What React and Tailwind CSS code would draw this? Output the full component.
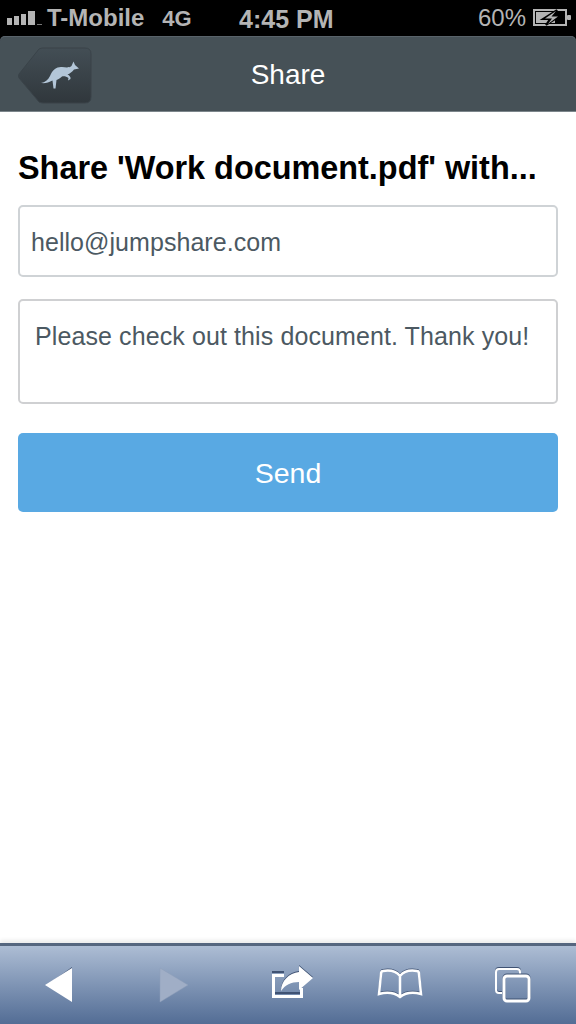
const helvetica = { fontFamily: '"Liberation Sans", Arial, sans-serif' };

function Signal() {
  return (
    <svg width="35" height="14" viewBox="0 0 35 14" className="block">
      <rect x="0" y="7" width="5" height="7" fill="#b4b4b4" />
      <rect x="7" y="5" width="5" height="9" fill="#b4b4b4" />
      <rect x="14" y="3" width="5" height="11" fill="#b4b4b4" />
      <rect x="21" y="0" width="7" height="14" fill="#b4b4b4" />
      <rect x="30" y="13" width="5" height="1" fill="#777" />
    </svg>
  );
}

function Battery() {
  return (
    <svg width="38" height="18" viewBox="0 0 38 18" className="block">
      <rect x="1" y="1" width="32" height="15" fill="none" stroke="#b4b4b4" strokeWidth="2" />
      <rect x="3" y="3" width="19" height="11" fill="#b4b4b4" />
      <rect x="34" y="6" width="4" height="5" rx="1" fill="#b4b4b4" />
      <path d="M24 1 L10 10 H17 L13 16 L27 7 H20 Z" fill="#000" stroke="#000" strokeWidth="2" />
      <path d="M23 2 L12 9.5 H19 L15 15 L25 7.5 H18.5 Z" fill="#b4b4b4" />
    </svg>
  );
}

function Kangaroo() {
  return (
    <svg width="40" height="32" viewBox="0 0 40 32" className="block">
      <path
        d="M1 24 C5 23.5 8 21 10 17 C12.5 10.5 17 7.5 22 8 C26 8.5 29 9 31.5 7 L33.5 2.5 L35 6 L39 9.5 L34 10.5 C32 13 30 14.5 27.5 15.5 C29.5 16.5 31 18 30.5 20 L28 21.5 L28.5 19 C26.5 17.5 24 17 22 17.5 C20 19.5 18 20.5 16.5 21 L15.5 29.5 L13.5 29.5 L12.5 21.5 C9 23.5 5 24.5 1 24 Z"
        fill="#b3c6d8"
      />
    </svg>
  );
}

function BackBadge() {
  return (
    <svg width="76" height="58" viewBox="0 0 76 58" className="block">
      <defs>
        <linearGradient id="badge" x1="0" y1="0" x2="0" y2="1">
          <stop offset="0" stopColor="#434e55" />
          <stop offset="1" stopColor="#30373c" />
        </linearGradient>
      </defs>
      <path
        d="M26 1 H68 Q74 1 74 7 V50 Q74 56 68 56 H26 Q24 56 22 55 L2 31 Q1 29 2 27 L22 2 Q24 1 26 1 Z"
        fill="url(#badge)"
        stroke="#3a4349"
      />
    </svg>
  );
}

function BackArrow() {
  return (
    <svg width="30" height="36" viewBox="0 0 30 36" className="block">
      <path d="M28 0 V2 L3 18 Z" fill="#3f5273" />
      <path d="M28 1 V35 L1 18 Z" fill="#fff" />
    </svg>
  );
}

function ForwardArrow() {
  return (
    <svg width="30" height="36" viewBox="0 0 30 36" className="block">
      <path d="M1 1 V35 L29 18 Z" fill="#a0aec6" stroke="#8e9eb9" strokeWidth="0.5" />
    </svg>
  );
}

function ShareIcon() {
  return (
    <svg width="44" height="36" viewBox="0 0 44 36" className="block">
      {/* shadow strokes */}
      <rect x="1" y="7" width="12" height="2" fill="#3f5273" />
      <rect x="4" y="28" width="26" height="2" fill="#3f5273" />
      <path d="M1 10 H13 V13 H4 V31 H29 V24 H32 V34 H1 Z" fill="#fff" />
      <path d="M28 1 L42 13 L28 25 V17 C20 17 14 20 10 26 C10 16 18 8 28 7 Z" fill="#3f5273" />
      <path d="M28 2 L42 14 L28 26 V18 C20 18 14 21 10 27 C10 17 18 9 28 8 Z" fill="#fff" />
    </svg>
  );
}

function BookIcon() {
  const d =
    "M23 8 C19 3 12 2 6 3 Q4 3 4 6 L2 26 C10 24 18 25 23 29 C28 25 36 24 44 26 L42 6 Q42 3 40 3 C34 2 27 3 23 8 Z M23 8 V28";
  return (
    <svg width="46" height="32" viewBox="0 0 46 32" className="block" fill="none">
      <path d={d} stroke="#3f5273" strokeWidth="2" transform="translate(0 -1)" />
      <path d={d} stroke="#fff" strokeWidth="2.5" />
    </svg>
  );
}

function TabsIcon() {
  return (
    <svg width="38" height="36" viewBox="0 0 38 36" className="block" fill="none">
      <path d="M8 26 H5 Q2 26 2 23 V5 Q2 2 5 2 H23 Q26 2 26 5 V8" stroke="#3f5273" strokeWidth="2" transform="translate(0 -1)" />
      <path d="M8 26 H5 Q2 26 2 23 V5 Q2 2 5 2 H23 Q26 2 26 5 V8" stroke="#fff" strokeWidth="2" />
      <rect x="10" y="9" width="25" height="25" rx="3" stroke="#3f5273" strokeWidth="3" transform="translate(0 -1)" />
      <rect x="10" y="9" width="25" height="25" rx="3" stroke="#fff" strokeWidth="3" />
    </svg>
  );
}

export default function App() {
  return (
    <div className="flex flex-col w-[576px] h-[1024px] bg-white overflow-hidden" style={helvetica}>
      {/* status bar */}
      <div className="flex items-center justify-between h-9 bg-black text-[#b4b4b4] font-bold text-[24px] relative">
        <div className="flex items-center pl-[7px]">
          <Signal />
          <span className="ml-[5px]">T-Mobile</span>
          <span className="ml-[18px] text-[22px]">4G</span>
        </div>
        <div className="absolute left-[239px] top-[1px] text-[25px]">4:45 PM</div>
        <div className="flex items-center pr-[5px]">
          <span className="font-normal mr-[7px]">60%</span>
          <Battery />
        </div>
      </div>

      {/* header */}
      <div className="bg-black">
        <div className="relative flex items-center justify-center h-[76px] pt-[3px] rounded-t-[5px] bg-[#465157] border-b border-b-[#7c868b] shadow-[inset_0_1px_0_#59636a]">
          <div className="absolute left-[17px] top-[11px]">
            <BackBadge />
          </div>
          <div className="absolute left-[40px] top-[23px]">
            <Kangaroo />
          </div>
          <span className="text-white text-[28px]">Share</span>
        </div>
      </div>

      {/* form */}
      <main className="flex-1 flex flex-col px-[18px] pt-[37px]">
        <h1 className="text-[32.4px] leading-[38px] font-bold text-black whitespace-nowrap">
          Share 'Work document.pdf' with...
        </h1>
        <div className="flex items-center h-[72px] mt-[18px] pl-[11px] pt-[3px] border-2 border-[#cfd3d6] rounded-[5px] text-[25px] tracking-[0.05px] text-[#4c5962]">
          hello@jumpshare.com
        </div>
        <div className="h-[105px] mt-[22px] pl-[15px] pt-[20px] border-2 border-[#cfd0d2] rounded-[5px] text-[25px] tracking-[0.1px] leading-[30px] text-[#4c5962]">
          Please check out this document. Thank you!
        </div>
        <button className="flex items-center justify-center h-[79px] mt-[29px] pt-[2px] bg-[#59a9e3] rounded-[5px] text-white text-[28.5px]">
          Send
        </button>
      </main>

      {/* safari toolbar */}
      <div className="flex items-center h-[81px] bg-gradient-to-b from-[#adbdd4] to-[#536d95] border-t-[3px] border-t-[#55667f] shadow-[0_-3px_4px_rgba(0,0,0,0.08)] relative">
        <div className="absolute left-[44px] top-[21px]"><BackArrow /></div>
        <div className="absolute left-[159px] top-[21px]"><ForwardArrow /></div>
        <div className="absolute left-[271px] top-[18px]"><ShareIcon /></div>
        <div className="absolute left-[377px] top-[22px]"><BookIcon /></div>
        <div className="absolute left-[494px] top-[21px]"><TabsIcon /></div>
      </div>
    </div>
  );
}
